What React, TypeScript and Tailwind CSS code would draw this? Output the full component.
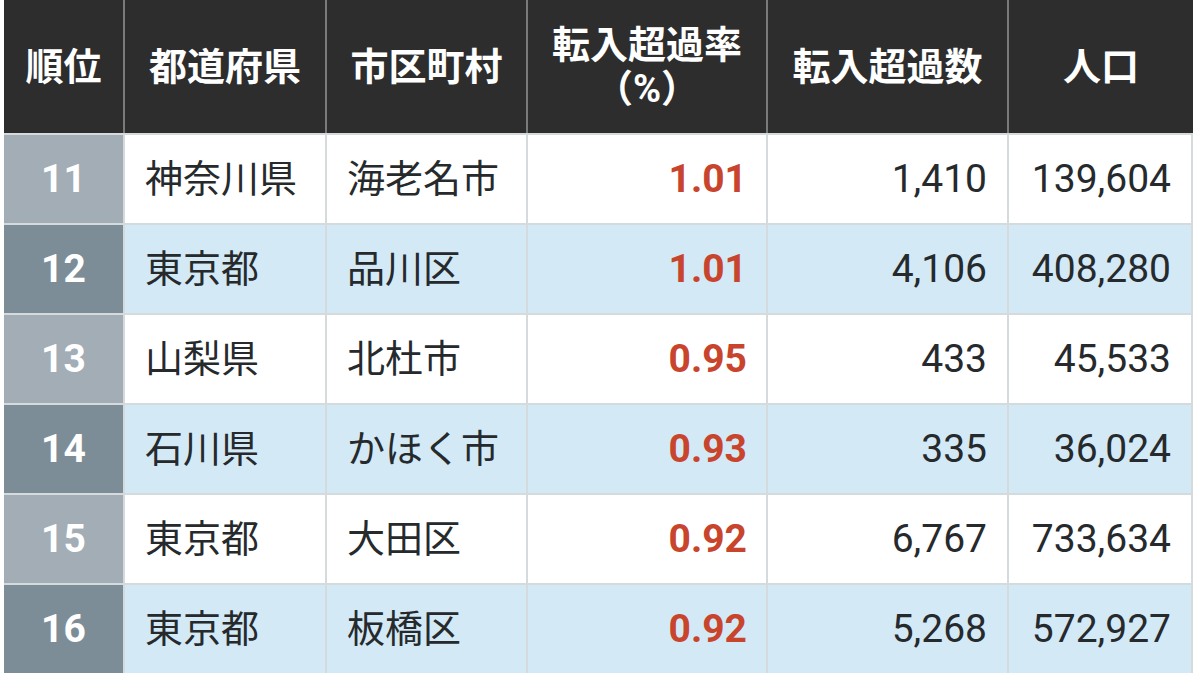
const rows = [
  { rank: "11", pref: "神奈川県", city: "海老名市", rate: "1.01", count: "1,410", pop: "139,604" },
  { rank: "12", pref: "東京都", city: "品川区", rate: "1.01", count: "4,106", pop: "408,280" },
  { rank: "13", pref: "山梨県", city: "北杜市", rate: "0.95", count: "433", pop: "45,533" },
  { rank: "14", pref: "石川県", city: "かほく市", rate: "0.93", count: "335", pop: "36,024" },
  { rank: "15", pref: "東京都", city: "大田区", rate: "0.92", count: "6,767", pop: "733,634" },
  { rank: "16", pref: "東京都", city: "板橋区", rate: "0.92", count: "5,268", pop: "572,927" }
];

const font = "font-['Roboto','Noto_Sans_CJK_JP',sans-serif]";

export default function App() {
  return (
    <div className={`h-[674px] w-[1200px] overflow-hidden bg-white pl-[4px] ${font}`}>
      <div className="grid w-[1189px] grid-cols-[121px_202px_201px_240px_241px_184px]">
        {["順位", "都道府県", "市区町村", "転入超過率\n（%）", "転入超過数", "人口"].map((h, i) => (
          <div
            key={h}
            className={`flex h-[133px] items-center justify-center whitespace-pre-line bg-[#2d2d2d] text-center text-[38px] font-bold leading-[44px] text-white ${i < 5 ? "border-r-2 border-[#7a7a7a]" : ""}`}
          >
            {h}
          </div>
        ))}
        {rows.map((r, idx) => {
          const odd = idx % 2 === 0;
          const bg = odd ? "bg-white" : "bg-[#d3e9f6]";
          const cell = `flex h-[90px] items-center border-t-2 border-r-2 border-[#d5dadd] px-5 text-[38px] text-[#262a2d]`;
          return [
            <div
              key={r.rank + "a"}
              className={`flex h-[90px] items-center justify-center border-t-2 border-r-2 border-[#d5dadd] text-[39px] font-bold text-white ${odd ? "bg-[#a2adb5]" : "bg-[#7d8d98]"}`}
            >
              {r.rank}
            </div>,
            <div key={r.rank + "b"} className={`${cell} ${bg}`}>{r.pref}</div>,
            <div key={r.rank + "c"} className={`${cell} ${bg}`}>{r.city}</div>,
            <div key={r.rank + "d"} className={`${cell} ${bg} justify-end pr-[19px] text-[39px] font-bold text-[#c8442c]`}>{r.rate}</div>,
            <div key={r.rank + "e"} className={`${cell} ${bg} justify-end text-[39px]`}>{r.count}</div>,
            <div key={r.rank + "f"} className={`${cell} ${bg} justify-end border-r-0 text-[39px]`}>{r.pop}</div>
          ];
        })}
      </div>
    </div>
  );
}
